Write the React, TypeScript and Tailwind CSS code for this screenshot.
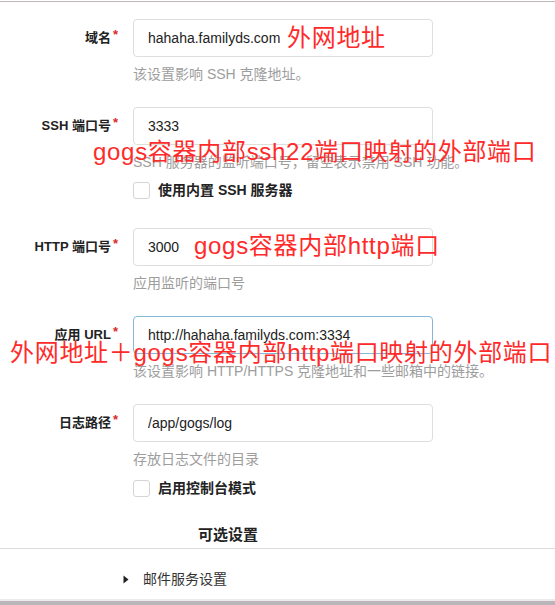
import React from "react";

const baseFont = { fontFamily: '"Liberation Sans", "Noto Sans CJK SC", sans-serif' };
const redFont = { fontFamily: '"Liberation Sans", "Noto Sans CJK SC", sans-serif' };

function Label({ text }: { text: string }) {
  return (
    <div className="w-[118px] h-[38px] flex items-center justify-end shrink-0">
      <span className="text-[13px] font-bold text-[#222]">{text}</span>
      <span className="text-[13px] font-bold text-[#db2828] ml-[2px] -mt-[6px]">*</span>
    </div>
  );
}

function Input({ value, focus }: { value: string; focus?: boolean }) {
  return (
    <div
      className={
        "w-[300px] h-[38px] rounded-[4px] border px-[14px] flex items-center text-[14px] text-[#222] " +
        (focus ? "border-[#85b7d9]" : "border-[#dedede]")
      }
    >
      {value}
    </div>
  );
}

function Help({ text }: { text: string }) {
  return <div className="mt-[8px] h-[18px] leading-[18px] text-[14px] text-[#9d9d9d]">{text}</div>;
}

function Check({ text, mt }: { text: string; mt: string }) {
  return (
    <div className={"h-[20px] flex items-center " + mt}>
      <div className="w-[17px] h-[17px] rounded-[3px] border border-[#d4d4d5] bg-white" />
      <span className="ml-[8px] text-[14px] font-bold text-[#222]">{text}</span>
    </div>
  );
}

export default function App() {
  return (
    <div className="relative w-[555px] h-[605px] overflow-hidden bg-white flex flex-col" style={baseFont}>
      <div className="h-[2px] border-b border-[#bfb8bb] shrink-0" />

      <div className="flex mt-[17px]">
        <Label text="域名" />
        <div className="ml-[15px]">
          <Input value="hahaha.familyds.com" />
          <Help text="该设置影响 SSH 克隆地址。" />
        </div>
      </div>

      <div className="flex mt-[24px]">
        <Label text="SSH 端口号" />
        <div className="ml-[15px]">
          <Input value="3333" />
          <Help text="SSH 服务器的监听端口号，留空表示禁用 SSH 功能。" />
          <Check text="使用内置 SSH 服务器" mt="mt-[9px]" />
        </div>
      </div>

      <div className="flex mt-[28px]">
        <Label text="HTTP 端口号" />
        <div className="ml-[15px]">
          <Input value="3000" />
          <Help text="应用监听的端口号" />
        </div>
      </div>

      <div className="flex mt-[24px]">
        <Label text="应用 URL" />
        <div className="ml-[15px]">
          <Input value="http://hahaha.familyds.com:3334" focus />
          <Help text="该设置影响 HTTP/HTTPS 克隆地址和一些邮箱中的链接。" />
        </div>
      </div>

      <div className="flex mt-[24px]">
        <Label text="日志路径" />
        <div className="ml-[15px]">
          <Input value="/app/gogs/log" />
          <Help text="存放日志文件的目录" />
          <Check text="启用控制台模式" mt="mt-[10px]" />
        </div>
      </div>

      <div className="mt-[27px] ml-[198px] h-[20px] leading-[20px] text-[15px] font-bold text-[#222]">可选设置</div>
      <div className="mt-[3px] border-t border-[#dcdcdc]" />
      <div className="mt-[20px] h-[20px] flex items-center ml-[123px]">
        <svg width="6" height="9" viewBox="0 0 6 9">
          <path d="M0.5 0.5 L5.5 4.5 L0.5 8.5 Z" fill="#222" />
        </svg>
        <span className="ml-[14px] text-[14px] text-[#333]">邮件服务设置</span>
      </div>

      <div className="mt-auto h-[6px] bg-[#bab5b8] border-t-2 border-[#eee9ee] shrink-0" />

      <div className="absolute left-[287px] top-[26px] text-[24px] leading-[24px] tracking-[0.7px] text-[#ff2a2a] whitespace-nowrap" style={redFont}>
        外网地址
      </div>
      <div className="absolute left-[93px] top-[140px] text-[24px] leading-[24px] tracking-[0.7px] text-[#ff2a2a] whitespace-nowrap" style={redFont}>
        gogs容器内部ssh22端口映射的外部端口
      </div>
      <div className="absolute left-[194px] top-[234px] text-[24px] leading-[24px] tracking-[0.7px] text-[#ff2a2a] whitespace-nowrap" style={redFont}>
        gogs容器内部http端口
      </div>
      <div className="absolute left-[10px] top-[341px] text-[24px] leading-[24px] tracking-[0.7px] text-[#ff2a2a] whitespace-nowrap" style={redFont}>
        外网地址＋gogs容器内部http端口映射的外部端口
      </div>
    </div>
  );
}
